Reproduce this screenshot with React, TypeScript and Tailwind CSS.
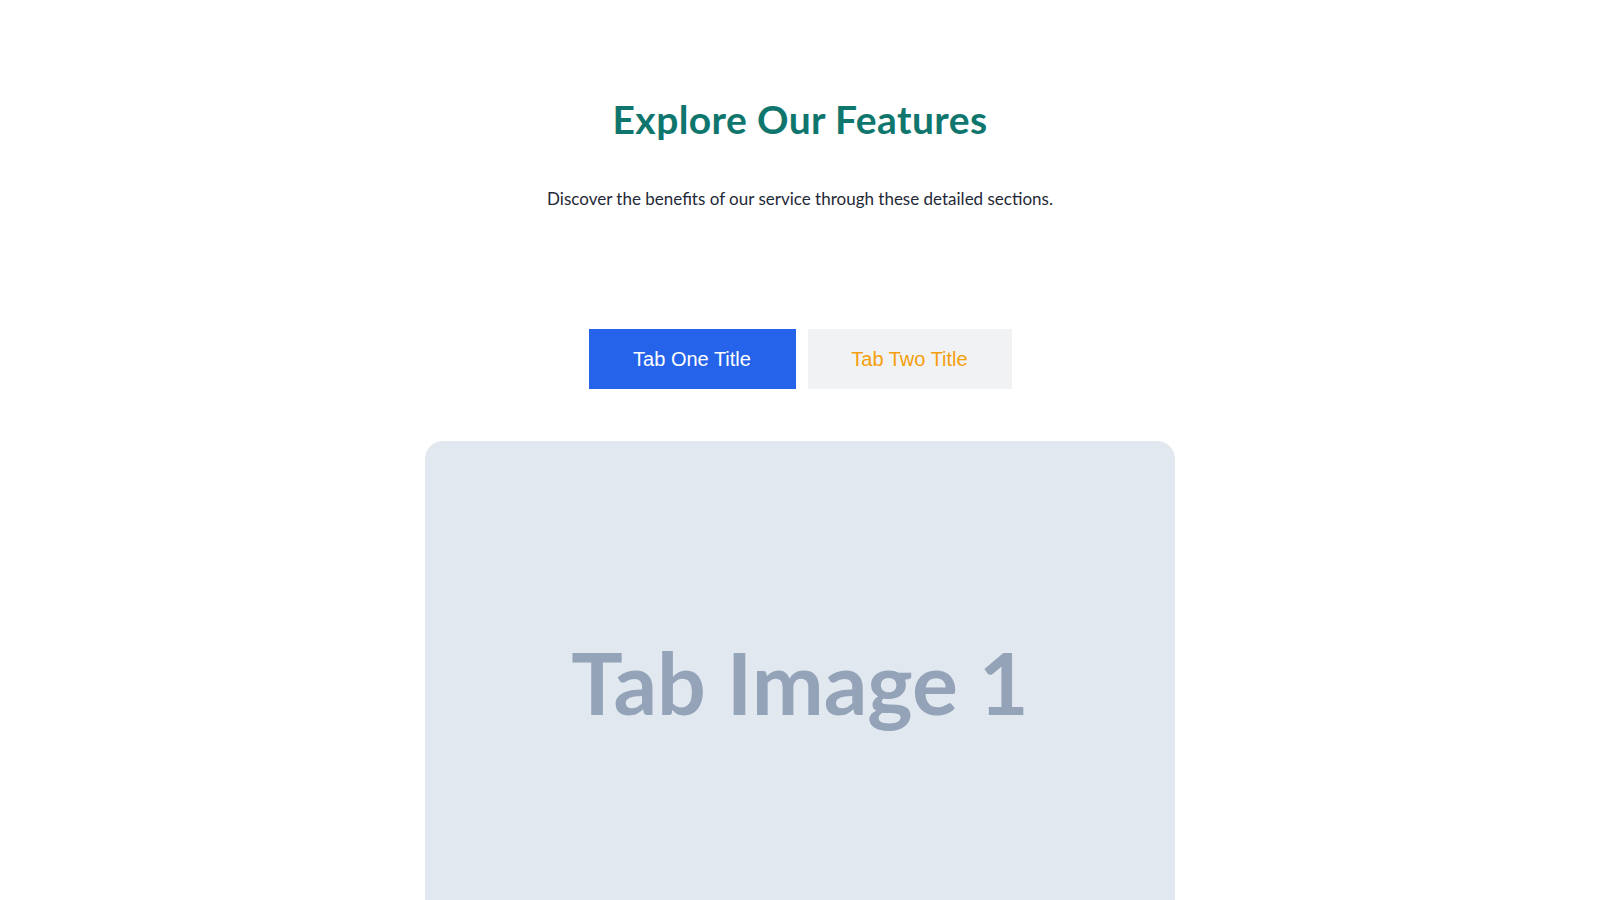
export default function App() {
  return (
    <div className="min-h-screen bg-white">
      <section className="mx-auto flex max-w-[1200px] flex-col items-center px-4 pt-[97px]">
        <h2 className="font-['Lato',sans-serif] text-[39px] leading-[44px] font-bold tracking-[0.4px] text-[#0f766e]">
          Explore Our Features
        </h2>
        <p className="mt-[46px] font-['Lato',sans-serif] text-[17px] leading-6 text-[#1f2937]">
          Discover the benefits of our service through these detailed sections.
        </p>

        <div className="mt-[118px] flex gap-3">
          <button className="h-[60px] w-[207px] bg-[#2563eb] font-['Liberation_Sans',Arial,sans-serif] text-[20px] text-white">
            Tab One Title
          </button>
          <button className="h-[60px] w-[204px] bg-[#f1f2f4] font-['Liberation_Sans',Arial,sans-serif] text-[20px] text-[#f59e0b]">
            Tab Two Title
          </button>
        </div>

        <div className="mt-[52px] flex h-[500px] w-[750px] items-center justify-center rounded-[18px] bg-[#e2e8f0] pb-[18px]">
          <span className="font-['Lato',sans-serif] text-[86px] leading-none font-bold text-[#94a3b8]">
            Tab Image 1
          </span>
        </div>
      </section>
    </div>
  );
}
